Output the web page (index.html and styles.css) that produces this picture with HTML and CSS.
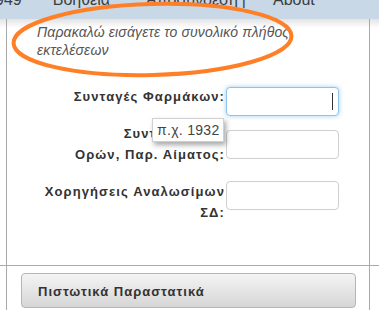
FILE: index.html
```html
<!DOCTYPE html>
<html lang="el">
<head>
<meta charset="utf-8">
<title>Φόρμα</title>
<link rel="stylesheet" href="styles.css">
</head>
<body>
<div class="nav">
  <div class="nav-inner">
    <span class="nav-item first">949</span>
    <span class="nav-item help">Βοήθεια</span>
    <span class="nav-item logout">Αποσύνδεση</span>
    <span class="nav-sep">|</span>
    <span class="nav-item about">About</span>
  </div>
</div>
<div class="page">
  <div class="panel">
    <p class="hint">Παρακαλώ εισάγετε το συνολικό πλήθος<br>εκτελέσεων</p>
    <div class="form">
      <div class="row row-1">
        <label class="label">Συνταγές Φαρμάκων:</label>
        <span class="field focused"><input class="input" type="text"></span>
      </div>
      <div class="row row-2">
        <label class="label">Συνταγές Εργ.<br>Ορών, Παρ. Αίματος:</label>
        <span class="field"><input class="input" type="text"></span>
      </div>
      <div class="row row-3">
        <label class="label">Χορηγήσεις Αναλωσίμων<br>ΣΔ:</label>
        <span class="field"><input class="input" type="text"></span>
      </div>
    </div>
    <div class="divider"></div>
    <div class="actions">
      <button class="btn" type="button">Πιστωτικά Παραστατικά</button>
    </div>
  </div>
</div>
<div class="tooltip">π.χ. 1932</div>
<svg class="mark" width="379" height="100" viewBox="0 0 379 100">
  <ellipse cx="152.5" cy="39.5" rx="139" ry="35.5" fill="none" stroke="#ff7f27" stroke-width="4" transform="rotate(-1.5 152.5 39.5)"/>
</svg>
</body>
</html>
```
FILE: styles.css
```css
* { box-sizing: border-box; }
html, body { margin: 0; padding: 0; }
body {
  width: 379px;
  height: 310px;
  overflow: hidden;
  position: relative;
  font-family: "Liberation Sans", Arial, sans-serif;
  background: #fff;
  color: #333;
}
.nav {
  height: 19px;
  overflow: hidden;
  background: #c8d8e7;
}
.nav-inner {
  display: flex;
  margin-top: -8px;
  font-size: 16px;
  line-height: 16px;
  color: #3d3d3d;
  white-space: nowrap;
}
.nav-item.first { margin-left: -5px; }
.nav-item.help { margin-left: 31px; }
.nav-item.logout { margin-left: 36px; }
.nav-sep { margin-left: 4px; }
.nav-item.about { margin-left: 27px; }

.page {
  background: linear-gradient(#e3e3e3, #fff 9px);
  height: 291px;
}
.panel {
  margin: 0 9px 0 6px;
  height: 291px;
  border-left: 1px solid #a9a9a9;
  border-right: 1px solid #a9a9a9;
}
.hint {
  margin: 0;
  padding: 4px 0 0 30px;
  font-size: 14px;
  line-height: 18px;
  font-style: italic;
  letter-spacing: 0.15px;
  color: #555;
}
.row {
  display: flex;
}
.row-1 { margin-top: 28px; align-items: flex-start; }
.row-2 { margin-top: 7px; align-items: center; }
.row-3 { margin-top: 16px; align-items: flex-start; }
.label {
  width: 218px;
  padding-right: 0;
  text-align: right;
  font-size: 13px;
  line-height: 21px;
  font-weight: bold;
  letter-spacing: 1.1px;
  color: #333;
}
.row-1 .label { margin-top: -1px; }
.field {
  position: relative;
  display: block;
  width: 113px;
  height: 29px;
  margin-left: 1px;
}
.input {
  display: block;
  width: 113px;
  height: 29px;
  margin: 0;
  padding: 0 6px;
  border: 1px solid #cfcfcf;
  border-radius: 4px;
  background: #fff;
  font-family: inherit;
  font-size: 13px;
  outline: none;
}
.field.focused .input {
  border-color: #8fc3ea;
  box-shadow: 0 0 5px rgba(82, 168, 236, 0.55);
}
.field.focused::after {
  content: "";
  position: absolute;
  left: 106px;
  top: 6px;
  width: 1px;
  height: 17px;
  background: #333;
}
.divider {
  height: 1px;
  margin: 42px -10px 0 -7px;
  background: #a9a9a9;
}
.actions {
  padding: 7px 0 0 14px;
}
.btn {
  display: block;
  width: 335px;
  height: 35px;
  margin: 0;
  padding: 2px 0 0 16px;
  text-align: left;
  border: 1px solid #b5b5b5;
  border-radius: 4px;
  background: linear-gradient(#f4f4f4, #d6d6d6);
  font-family: inherit;
  font-size: 13px;
  font-weight: bold;
  letter-spacing: 1px;
  color: #333;
}
.tooltip {
  position: absolute;
  left: 152px;
  top: 118px;
  width: 72px;
  height: 24px;
  padding: 3px 0 0 4px;
  background: #fff;
  border: 1px solid #d0d0d0;
  box-shadow: 2px 3px 5px rgba(0, 0, 0, 0.35);
  font-size: 14px;
  line-height: 17px;
  letter-spacing: 0.3px;
  color: #444;
  white-space: nowrap;
}
.mark {
  position: absolute;
  left: 0;
  top: 0;
  pointer-events: none;
}
```
